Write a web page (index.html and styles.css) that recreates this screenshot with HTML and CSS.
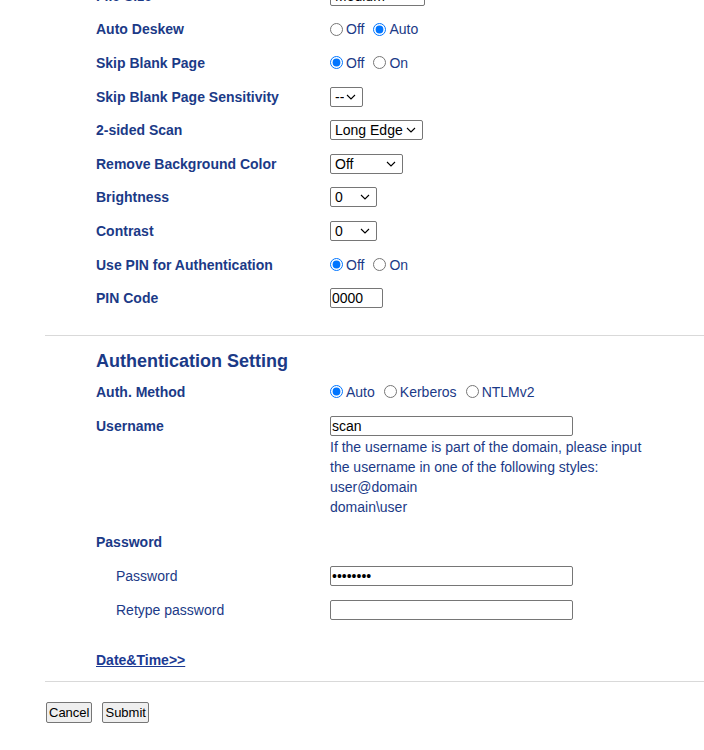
FILE: index.html
```html
<!DOCTYPE html>
<html lang="en">
  <head>
    <meta charset="UTF-8" />
    <meta name="viewport" content="width=device-width, initial-scale=1.0" />
    <title>Scan to Network Profile</title>
    <link rel="stylesheet" href="styles.css">
  </head>

  <body>
    <div class="page">
      <form id="profile-form" method="POST" action="/scan/profile">
        <!-- Scan options -->
        <div class="section">
          <div class="row">
            <label class="label">File Size</label>
            <div class="control">
              <select class="sel-medium" name="filesize">
                <option>Medium</option>
                <option>Large</option>
                <option>Small</option>
              </select>
            </div>
          </div>

          <div class="row">
            <label class="label">Auto Deskew</label>
            <div class="control radios">
              <label><input type="radio" name="deskew" value="off" />Off</label>
              <label><input type="radio" name="deskew" value="auto" checked />Auto</label>
            </div>
          </div>

          <div class="row">
            <label class="label">Skip Blank Page</label>
            <div class="control radios">
              <label><input type="radio" name="skipblank" value="off" checked />Off</label>
              <label><input type="radio" name="skipblank" value="on" />On</label>
            </div>
          </div>

          <div class="row">
            <label class="label">Skip Blank Page Sensitivity</label>
            <div class="control">
              <select class="sel-dash" name="sensitivity">
                <option>--</option>
              </select>
            </div>
          </div>

          <div class="row">
            <label class="label">2-sided Scan</label>
            <div class="control">
              <select class="sel-edge" name="duplex">
                <option>Long Edge</option>
                <option>Short Edge</option>
              </select>
            </div>
          </div>

          <div class="row">
            <label class="label">Remove Background Color</label>
            <div class="control">
              <select class="sel-bg" name="bgremove">
                <option>Off</option>
                <option>Low</option>
                <option>Medium</option>
                <option>High</option>
              </select>
            </div>
          </div>

          <div class="row">
            <label class="label">Brightness</label>
            <div class="control">
              <select class="sel-num" name="brightness">
                <option>0</option>
              </select>
            </div>
          </div>

          <div class="row">
            <label class="label">Contrast</label>
            <div class="control">
              <select class="sel-num" name="contrast">
                <option>0</option>
              </select>
            </div>
          </div>

          <div class="row">
            <label class="label">Use PIN for Authentication</label>
            <div class="control radios">
              <label><input type="radio" name="usepin" value="off" checked />Off</label>
              <label><input type="radio" name="usepin" value="on" />On</label>
            </div>
          </div>

          <div class="row">
            <label class="label">PIN Code</label>
            <div class="control">
              <input type="text" class="input-pin" name="pin" value="0000" maxlength="4" />
            </div>
          </div>
        </div>

        <div class="divider"></div>

        <!-- Authentication -->
        <div class="section">
          <h2 class="section-title">Authentication Setting</h2>

          <div class="row">
            <label class="label">Auth. Method</label>
            <div class="control radios">
              <label><input type="radio" name="authmethod" value="auto" checked />Auto</label>
              <label><input type="radio" name="authmethod" value="kerberos" />Kerberos</label>
              <label><input type="radio" name="authmethod" value="ntlmv2" />NTLMv2</label>
            </div>
          </div>

          <div class="row row-tall">
            <label class="label">Username</label>
            <div class="control">
              <input type="text" class="input-wide" name="username" value="scan" />
              <p class="hint">
                If the username is part of the domain, please input<br />
                the username in one of the following styles:<br />
                user@domain<br />
                domain\user
              </p>
            </div>
          </div>

          <div class="row">
            <span class="label">Password</span>
          </div>

          <div class="row row-sub">
            <label class="label-sub">Password</label>
            <div class="control">
              <input type="password" class="input-wide input-pass" name="password" value="password" />
            </div>
          </div>

          <div class="row row-sub">
            <label class="label-sub">Retype password</label>
            <div class="control">
              <input type="password" class="input-wide input-pass" name="password2" value="" />
            </div>
          </div>

          <a class="more-link" href="#datetime">Date&amp;Time&gt;&gt;</a>
        </div>

        <div class="divider divider-bottom"></div>

        <div class="buttons">
          <button type="button" class="btn">Cancel</button>
          <button type="submit" class="btn">Submit</button>
        </div>
      </form>
    </div>
  </body>
</html>
```

FILE: styles.css
```css
* {
  box-sizing: border-box;
}

body {
  margin: 0;
  background-color: #fff;
  font-family: "Liberation Sans", Arial, sans-serif;
  font-size: 14px;
  color: #1b3a87;
  overflow: hidden;
}

.page {
  margin-top: -21px;
  padding-left: 45px;
}

.section {
  padding-left: 51px;
}

.row {
  display: grid;
  grid-template-columns: 234px auto;
  align-items: center;
  height: 33.6px;
}

.label {
  font-weight: bold;
  font-size: 14px;
  color: #1b3a87;
}

.row-sub {
  grid-template-columns: 214px auto;
  padding-left: 20px;
}

.label-sub {
  font-size: 14px;
  color: #1b3a87;
}

.control {
  display: flex;
  flex-direction: column;
  align-items: flex-start;
}

.radios {
  flex-direction: row;
  align-items: center;
  gap: 9px;
}

.radios label {
  display: flex;
  align-items: center;
  color: #1b3a87;
}

.radios input {
  width: 13px;
  height: 13px;
  margin: 0 3px 0 0;
}

/* thin chevron instead of the default arrow */
select {
  -webkit-appearance: none;
  appearance: none;
  height: 20px;
  font-family: "Liberation Sans", Arial, sans-serif;
  font-size: 14px;
  color: #000;
  background-color: #fff;
  background-image: url("data:image/svg+xml;utf8,<svg xmlns='http://www.w3.org/2000/svg' width='10' height='6' viewBox='0 0 10 6'><path d='M1 1l4 4 4-4' fill='none' stroke='%23000' stroke-width='1.1'/></svg>");
  background-repeat: no-repeat;
  background-position: right 6px center;
  background-size: 10px 6px;
  border: 1px solid #767676;
  border-radius: 2px;
  padding: 0 18px 0 4px;
}

.sel-medium {
  width: 95px;
}

.sel-dash {
  width: 33px;
}

.sel-edge {
  width: 93px;
}

.sel-bg {
  width: 73px;
}

.sel-num {
  width: 47px;
}

input[type="text"],
input[type="password"] {
  height: 20px;
  font-family: "Liberation Sans", Arial, sans-serif;
  font-size: 14px;
  color: #000;
  border: 1px solid #767676;
  border-radius: 2px;
  padding: 0 1px;
  margin: 0;
}

.input-pin {
  width: 53px;
}

.input-wide {
  width: 243px;
}

.input-pass {
  height: 22px;
}

.row-tall {
  height: auto;
  align-items: start;
  padding-top: 7px;
}

.row-tall .label {
  line-height: 20px;
}

.hint {
  margin: 1px 0 9px;
  font-size: 14px;
  line-height: 20px;
  color: #1b3a87;
}

.divider {
  border-top: 1px solid #d9d9d9;
  margin-top: 20px;
}

.section-title {
  margin: 14px 0 3px;
  font-size: 18px;
  line-height: 22px;
  font-weight: bold;
  color: #1b3a87;
}

.more-link {
  display: inline-block;
  margin-top: 26px;
  font-size: 14px;
  line-height: 16px;
  font-weight: bold;
  color: #1b3a93;
  text-decoration: underline;
}

.divider-bottom {
  margin-top: 13px;
}

.buttons {
  display: flex;
  gap: 10px;
  margin-top: 20px;
  margin-left: 1px;
}

.btn {
  height: 21px;
  padding: 1px 2px;
  font-family: "Liberation Sans", Arial, sans-serif;
  font-size: 13px;
  color: #000;
  background-color: #efefef;
  border: 1px solid #767676;
  border-radius: 2px;
}
```
